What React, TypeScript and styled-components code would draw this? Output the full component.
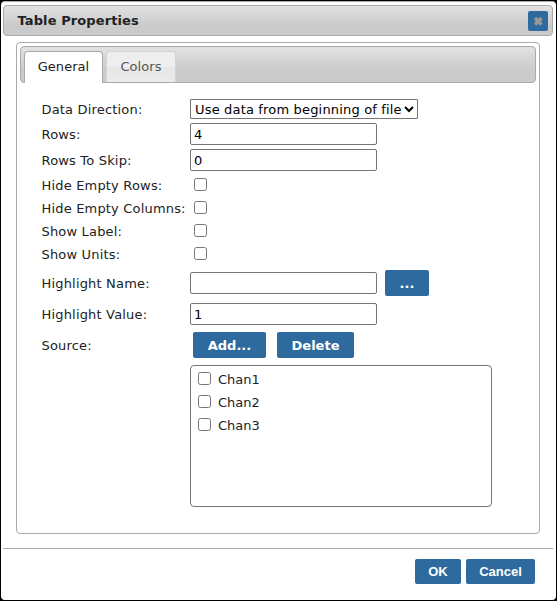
import React from "react";
import styled, { createGlobalStyle } from "styled-components";

const GlobalStyle = createGlobalStyle`
  * { box-sizing: border-box; }
  html, body { margin: 0; background: #fff; }
  body, button, input, select { font-family: Verdana, "DejaVu Sans", sans-serif; font-size: 13px; }
`;

const Frame = styled.div`
  width: 557px;
  height: 601px;
  border: 1px solid #000;
  background: #000;
`;

const Dialog = styled.div`
  height: 599px;
  border-top: 1px solid #aaa;
  border-radius: 4px;
  background: #fff;
  padding: 3px 3px 0 2px;
  color: #222;
  display: flex;
  flex-direction: column;
`;

const TitleBar = styled.header`
  height: 31px;
  flex: none;
  border: 1px solid #aaa;
  border-radius: 4px;
  background: linear-gradient(#e2e2e2 0%, #cbcbcb 65%, #cbcbcb 100%);
  display: flex;
  align-items: center;
  justify-content: space-between;
  padding: 0 4px 0 13.5px;
`;

const Title = styled.span`
  font-weight: bold;
  line-height: 18px;
  letter-spacing: 0.1px;
`;

const CloseButton = styled.button`
  width: 20px;
  height: 20px;
  padding: 0;
  border: 0;
  border-radius: 2px;
  background: #2e6a9e;
  display: flex;
  align-items: center;
  justify-content: center;
`;

const TabPanel = styled.main`
  height: 492px;
  flex: none;
  margin: 6px 13px 0;
  border: 1px solid #aaa;
  border-radius: 4px;
  padding: 3px;
`;

const TabList = styled.nav`
  height: 37px;
  border: 1px solid #aaa;
  border-radius: 4px;
  background: linear-gradient(#e2e2e2 0%, #cbcbcb 65%, #cbcbcb 100%);
  padding: 4px 0 0 3px;
  display: flex;
  gap: 3px;
`;

const Tab = styled.button<{ $active?: boolean; $width: number }>`
  width: ${(p) => p.$width}px;
  height: ${(p) => (p.$active ? 32 : 31)}px;
  padding: 0 0 ${(p) => (p.$active ? 3 : 2)}px;
  border: 1px solid ${(p) => (p.$active ? "#aaa" : "#d3d3d3")};
  border-bottom: 0;
  border-radius: 4px 4px 0 0;
  background: ${(p) => (p.$active ? "#fff" : "linear-gradient(#eee 0 50%, #e7e7e7 50% 60%, #ebebeb 100%)")};
  color: ${(p) => (p.$active ? "#212121" : "#555")};
  letter-spacing: 0.05px;
`;

const Form = styled.form`
  padding: 14px 0 0 21px;
`;

const Row = styled.div<{ $height: number }>`
  height: ${(p) => p.$height}px;
  display: grid;
  grid-template-columns: 149px 1fr;
  align-items: center;
`;

const Label = styled.label`
  white-space: nowrap;
  line-height: 18px;
  padding: 2px 0 0 0.5px;
  letter-spacing: 0.18px;
`;

const Controls = styled.div<{ $gap?: number; $inset?: number }>`
  display: flex;
  align-items: center;
  gap: ${(p) => p.$gap ?? 0}px;
  padding-left: ${(p) => p.$inset ?? 0}px;
`;

const TextInput = styled.input`
  width: 187px;
  height: 22px;
  padding: 1px 3px;
  border: 1px solid #767676;
  border-radius: 2px;
  background: #fff;
  color: #000;
  outline: 0;
`;

const SelectBox = styled.div`
  width: 228px;
  height: 20px;
  border: 1px solid #767676;
  border-radius: 1px;
  padding: 0 3px 0 4px;
  display: flex;
  align-items: center;
  justify-content: space-between;
  color: #000;
  letter-spacing: 0.17px;
  white-space: nowrap;
`;

const Checkbox = styled.input.attrs({ type: "checkbox" })`
  appearance: none;
  width: 13px;
  height: 13px;
  flex: none;
  margin: 0 0 0 4px;
  border: 1px solid #767676;
  border-radius: 2.5px;
  background: #fff;
`;

const Button = styled.button<{ $width: number }>`
  width: ${(p) => p.$width}px;
  height: 26px;
  padding: 0;
  border: 0;
  border-radius: 2px;
  background: #2e6a9e;
  color: #fff;
  font-weight: bold;
`;

const SourceList = styled.div`
  width: 302px;
  height: 142px;
  margin: 2px 0 0 149px;
  padding: 1px 3px;
  border: 1px solid #767676;
  border-radius: 4px;
`;

const SourceItem = styled.label`
  height: 23px;
  display: flex;
  align-items: center;
  gap: 7px;

  span {
    padding-top: 2px;
  }
`;

const Footer = styled.footer`
  flex: 1;
  margin-top: 14px;
  border-top: 1px solid #aaa;
  padding: 10px 18px 0 0;
  display: flex;
  justify-content: flex-end;
  gap: 5px;
`;

const FooterButton = styled(Button)`
  height: 25px;
  font-family: "Liberation Sans", Arial, sans-serif;
`;

const toggles = ["Hide Empty Rows:", "Hide Empty Columns:", "Show Label:", "Show Units:"];
const channels = ["Chan1", "Chan2", "Chan3"];

export default function App() {
  return (
    <>
      <GlobalStyle />
      <Frame>
        <Dialog>
          <TitleBar>
            <Title>Table Properties</Title>
            <CloseButton type="button" aria-label="Close">
              <svg width="10" height="10" viewBox="0 0 10 10">
                <path d="M2 2L8.5 8.5M8.5 2L2 8.5" stroke="#999" strokeWidth="3.5" />
              </svg>
            </CloseButton>
          </TitleBar>
          <TabPanel>
            <TabList>
              <Tab type="button" $active $width={79}>General</Tab>
              <Tab type="button" $width={70}>Colors</Tab>
            </TabList>
            <Form>
              <Row $height={24}>
                <Label>Data Direction:</Label>
                <SelectBox role="combobox">
                  <span>Use data from beginning of file</span>
                  <svg width="10" height="8" viewBox="0 0 10 8">
                    <path d="M1 2L5 6L9 2" fill="none" stroke="#000" strokeWidth="2" />
                  </svg>
                </SelectBox>
              </Row>
              <Row $height={26}>
                <Label>Rows:</Label>
                <TextInput defaultValue="4" />
              </Row>
              <Row $height={26}>
                <Label>Rows To Skip:</Label>
                <TextInput defaultValue="0" />
              </Row>
              {toggles.map((text) => (
                <Row $height={23} key={text}>
                  <Label>{text}</Label>
                  <Checkbox />
                </Row>
              ))}
              <Row $height={36}>
                <Label>Highlight Name:</Label>
                <Controls $gap={8}>
                  <TextInput />
                  <Button type="button" $width={44}>...</Button>
                </Controls>
              </Row>
              <Row $height={26}>
                <Label>Highlight Value:</Label>
                <TextInput defaultValue="1" />
              </Row>
              <Row $height={36}>
                <Label>Source:</Label>
                <Controls $gap={11} $inset={3}>
                  <Button type="button" $width={73}>Add...</Button>
                  <Button type="button" $width={77}>Delete</Button>
                </Controls>
              </Row>
              <SourceList>
                {channels.map((name) => (
                  <SourceItem key={name}>
                    <Checkbox />
                    <span>{name}</span>
                  </SourceItem>
                ))}
              </SourceList>
            </Form>
          </TabPanel>
          <Footer>
            <FooterButton type="button" $width={46}>OK</FooterButton>
            <FooterButton type="button" $width={69}>Cancel</FooterButton>
          </Footer>
        </Dialog>
      </Frame>
    </>
  );
}
